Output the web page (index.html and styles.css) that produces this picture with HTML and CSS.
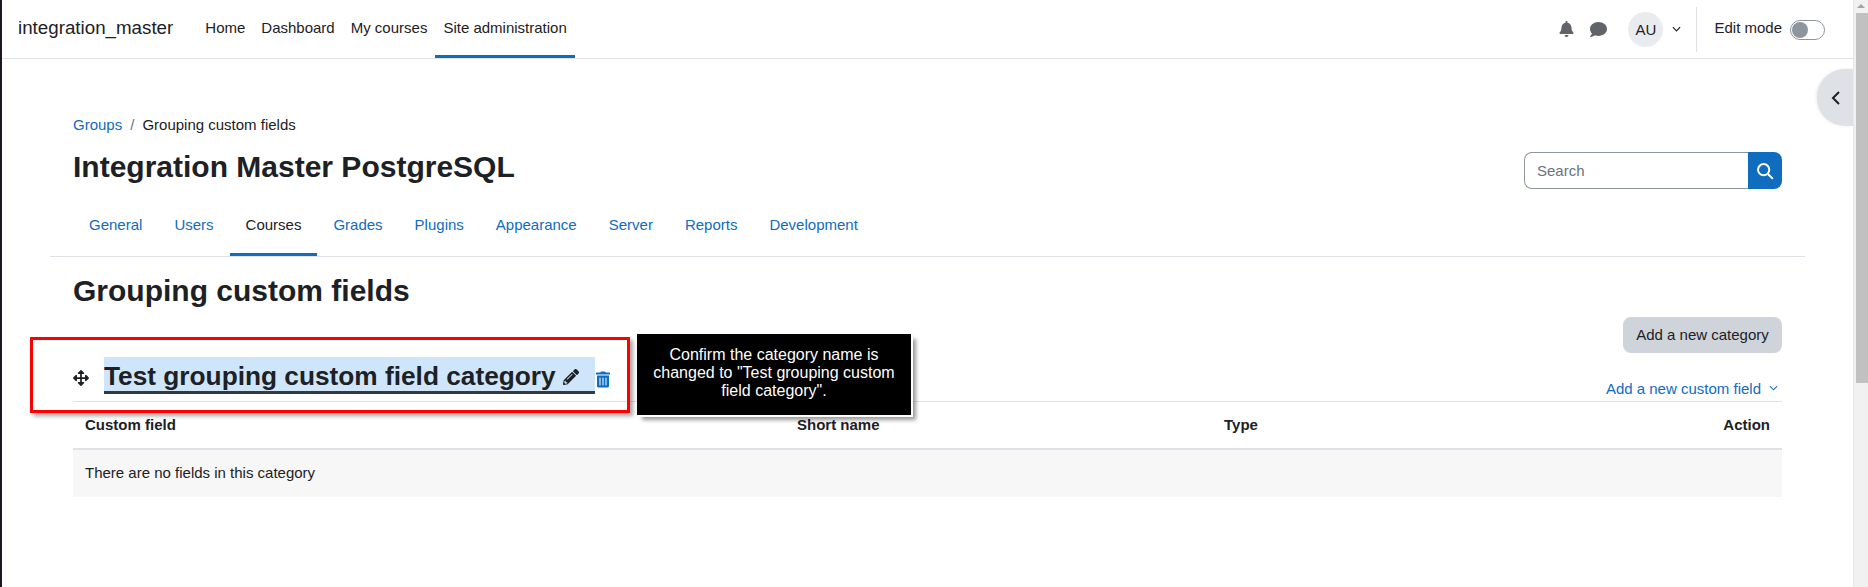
FILE: index.html
```html
<!DOCTYPE html>
<html lang="en">
<head>
<meta charset="utf-8">
<title>Grouping custom fields</title>
<link rel="stylesheet" href="styles.css">
</head>
<body>
<div class="page">
  <div class="viewport">
    <header class="navbar">
      <a class="brand">integration_master</a>
      <nav class="primary">
        <a>Home</a><a>Dashboard</a><a>My courses</a><a class="active">Site administration</a>
      </nav>
      <div class="nav-right">
        <svg class="ic-bell" viewBox="0 0 448 512"><path d="M224 512c35.32 0 63.97-28.65 63.97-64H160.03c0 35.35 28.65 64 63.97 64zm215.39-149.71c-19.32-20.76-55.47-51.99-55.47-154.29 0-77.7-54.48-139.9-127.94-155.16V32c0-17.67-14.32-32-31.98-32s-31.98 14.33-31.98 32v20.84C118.56 68.1 64.08 130.3 64.08 208c0 102.3-36.15 133.53-55.47 154.29-6 6.45-8.66 14.16-8.61 21.71.11 16.4 12.98 32 32.1 32h383.8c19.12 0 32-15.6 32.1-32 .05-7.55-2.61-15.27-8.61-21.71z"/></svg>
        <svg class="ic-comment" viewBox="0 0 512 512"><path d="M256 32C114.6 32 0 125.1 0 240c0 49.6 21.4 95 57 130.7C44.5 421.1 2.7 466 2.2 466.5c-2.2 2.3-2.8 5.7-1.5 8.7S4.8 480 8 480c66.3 0 116-31.8 140.6-51.4 32.7 12.3 69 19.4 107.4 19.4 141.4 0 256-93.1 256-208S397.4 32 256 32z"/></svg>
        <span class="avatar">AU</span>
        <svg class="ic-chev" viewBox="0 0 10 6"><path d="M1 1l4 4 4-4"/></svg>
        <span class="divider"></span>
        <span class="edit-label">Edit mode</span>
        <span class="toggle"><span class="knob"></span></span>
      </div>
    </header>

    <main class="content">
      <div class="breadcrumb"><a class="link">Groups</a><span class="sep">/</span><span>Grouping custom fields</span></div>
      <div class="title-row">
        <h1>Integration Master PostgreSQL</h1>
        <div class="search">
          <span class="search-input">Search</span>
          <span class="search-btn">
            <svg viewBox="0 0 16 16"><circle cx="6.8" cy="6.8" r="5"/><path d="M10.6 10.6l4.4 4.4"/></svg>
          </span>
        </div>
      </div>
      <nav class="tabs">
        <a>General</a><a>Users</a><a class="active">Courses</a><a>Grades</a><a>Plugins</a><a>Appearance</a><a>Server</a><a>Reports</a><a>Development</a>
      </nav>
      <h2>Grouping custom fields</h2>
      <div class="add-row"><span class="btn">Add a new category</span></div>
      <div class="cat-row">
        <svg class="ic-move" viewBox="0 0 512 512"><path d="M352.201 425.775l-79.196 79.196c-9.373 9.373-24.568 9.373-33.941 0l-79.196-79.196c-15.119-15.119-4.411-40.971 16.971-40.97h51.162L228 284H127.196v51.162c0 21.382-25.851 32.09-40.971 16.971L7.029 272.937c-9.373-9.373-9.373-24.569 0-33.941L86.225 159.8c15.119-15.119 40.971-4.411 40.971 16.971V228H228V127.196h-51.23c-21.382 0-32.09-25.851-16.971-40.971l79.196-79.196c9.373-9.373 24.568-9.373 33.941 0l79.196 79.196c15.119 15.119 4.411 40.971-16.971 40.971h-51.162V228h100.804v-51.162c0-21.382 25.851-32.09 40.97-16.971l79.196 79.196c9.373 9.373 9.373 24.569 0 33.941L425.773 352.2c-15.119 15.119-40.971 4.411-40.97-16.971V284H284v100.804h51.23c21.382 0 32.09 25.851 16.971 40.971z"/></svg>
        <div class="cat-name">
          <span class="cat-text">Test grouping custom field category</span>
          <svg class="ic-pencil" viewBox="0 0 512 512"><path d="M497.9 142.1l-46.1 46.1c-4.7 4.7-12.3 4.7-17 0l-111-111c-4.7-4.7-4.7-12.3 0-17l46.1-46.1c18.7-18.7 49.1-18.7 67.9 0l60.1 60.1c18.8 18.7 18.8 49.1 0 67.9zM284.2 99.8L21.6 362.4.4 483.9c-2.9 16.4 11.4 30.6 27.8 27.8l121.5-21.3 262.6-262.6c4.7-4.7 4.7-12.3 0-17l-111-111c-4.8-4.7-12.4-4.7-17.1 0zM124.1 339.9c-5.5-5.5-5.5-14.3 0-19.8l154-154c5.5-5.5 14.3-5.5 19.8 0s5.5 14.3 0 19.8l-154 154c-5.5 5.5-14.3 5.5-19.8 0zM88 424h48v36.3l-64.5 11.3-31.1-31.1L51.7 376H88v48z"/></svg>
        </div>
        <svg class="ic-trash" viewBox="0 0 448 512"><path d="M32 464a48 48 0 0 0 48 48h288a48 48 0 0 0 48-48V128H32zm272-256a16 16 0 0 1 32 0v224a16 16 0 0 1-32 0zm-96 0a16 16 0 0 1 32 0v224a16 16 0 0 1-32 0zm-96 0a16 16 0 0 1 32 0v224a16 16 0 0 1-32 0zM432 32H312l-9-19A24 24 0 0 0 281.5 0h-114.3a23.7 23.7 0 0 0-21.4 13L137 32H16A16 16 0 0 0 0 48v32a16 16 0 0 0 16 16h416a16 16 0 0 0 16-16V48a16 16 0 0 0-16-16z"/></svg>
        <a class="add-field link">Add a new custom field<svg class="ic-chev-link" viewBox="0 0 10 6"><path d="M1 1l4 4 4-4"/></svg></a>
      </div>
      <div class="thead">
        <span class="c1">Custom field</span><span class="c2">Short name</span><span class="c3">Type</span><span class="c4">Action</span>
      </div>
      <div class="empty">There are no fields in this category</div>
    </main>

    <div class="drawer-toggle">
      <svg viewBox="0 0 10 16"><path d="M8 2L2 8l6 6"/></svg>
    </div>
    <div class="redbox"></div>
    <div class="callout">Confirm the category name is changed to "Test grouping custom field category".</div>
  </div>
  <div class="scrollbar">
    <span class="arrow"></span>
    <span class="thumb"></span>
  </div>
</div>
</body>
</html>
```
FILE: styles.css
```css
* { box-sizing: border-box; }
html, body { margin: 0; height: 100%; overflow: hidden; background: #fff; }
body { font-family: "Liberation Sans", Arial, sans-serif; font-size: 15px; color: #1d2125; }
a { text-decoration: none; color: inherit; }
.link { color: #0f6cbf; }

.page { display: flex; height: 587px; }
.viewport { position: relative; flex: 1; border-left: 2px solid #1d1520; min-width: 0; }

.navbar { display: flex; align-items: stretch; height: 59px; border-bottom: 1px solid #dee2e6; padding: 0 28px 0 16px; }
.brand { font-size: 18.75px; line-height: 56px; margin-right: 24px; }
.primary { display: flex; }
.primary a { padding: 0 8px; line-height: 56px; height: 58px; }
.primary a.active { border-bottom: 3px solid #0f6cbf; }
.nav-right { margin-left: auto; display: flex; align-items: center; }
.ic-bell { width: 15px; height: 16px; fill: #606468; }
.ic-comment { width: 17px; height: 17px; fill: #606468; margin-left: 16px; }
.avatar { width: 35px; height: 35px; border-radius: 50%; background: #e9ecef; display: flex; align-items: center; justify-content: center; font-size: 15px; margin-left: 21px; }
.ic-chev { width: 9px; height: 6px; margin-left: 9px; fill: none; stroke: #1d2125; stroke-width: 1.3; }
.divider { width: 1px; height: 45px; background: #dee2e6; margin: 0 17px 0 15px; }
.edit-label { font-size: 15px; margin-bottom: 3px; }
.toggle { width: 35px; height: 20px; border: 1px solid #8f959e; border-radius: 10px; margin-left: 8px; margin-top: 2px; padding: 1px; background: #fff; display: flex; }
.knob { width: 16px; height: 16px; border-radius: 50%; background: #8f959e; }

.content { padding: 57px 71px 0; position: relative; }
.breadcrumb { font-size: 15px; line-height: 18px; display: flex; }
.sep { margin: 0 8px; color: #6a737b; }
.title-row { display: flex; justify-content: space-between; align-items: center; margin-top: 8px; height: 50px; }
h1 { margin: 0; font-size: 30px; line-height: 36px; font-weight: 700; }
.search { display: flex; height: 37px; width: 258px; margin-top: 7px; }
.search-input { flex: 1; border: 1px solid #8f959e; border-right: 0; border-radius: 8px 0 0 8px; padding: 0 12px; line-height: 35px; color: #6a737b; font-size: 15px; }
.search-btn { width: 34px; background: #0f6cbf; border-radius: 0 8px 8px 0; display: flex; align-items: center; justify-content: center; }
.search-btn svg { width: 18px; height: 18px; fill: none; stroke: #fff; stroke-width: 1.8; }

.tabs { display: flex; margin: 19px -23px 0; height: 46px; border-bottom: 1px solid #dee2e6; padding-left: 23px; }
.tabs a { color: #0f6cbf; padding: 0 16px; line-height: 28px; height: 45px; font-size: 15px; }
.tabs a.active { color: #1d2125; border-bottom: 3px solid #0f6cbf; }

h2 { margin: 16px 0 0; font-size: 30px; line-height: 36px; font-weight: 700; }
.add-row { display: flex; justify-content: flex-end; margin-top: 8px; }
.btn { background: #ced4da; border-radius: 8px; height: 36px; width: 159px; text-align: center; line-height: 36px; font-size: 15px; }

.cat-row { display: flex; align-items: center; height: 49px; border-bottom: 1px solid #dee2e6; }
.ic-move { width: 16px; height: 16px; fill: #1d2125; margin-top: 2px; }
.cat-name { margin-left: 15px; width: 491px; height: 37px; margin-bottom: 3px; background: #cfe6fa; border-bottom: 3px solid #343a40; display: flex; align-items: center; }
.cat-text { font-size: 26.25px; font-weight: 700; line-height: 34px; padding-top: 3px; }
.ic-pencil { width: 16px; height: 16px; margin-left: 7px; margin-top: 6px; fill: #1d2125; }
.ic-trash { width: 14px; height: 17px; fill: #0f6cbf; margin-left: 1px; margin-top: 4px; }
.add-field { margin-left: auto; margin-right: 4px; font-size: 15px; display: flex; align-items: center; margin-top: 22px; }
.ic-chev-link { width: 9px; height: 6px; margin-left: 8px; fill: none; stroke: #0f6cbf; stroke-width: 1.2; }

.thead { display: flex; height: 48px; padding: 0 12px; line-height: 45px; border-bottom: 2px solid #dee2e6; font-weight: 700; font-size: 15px; }
.c1 { width: 712px; }
.c2 { width: 427px; }
.c3 { flex: 1; }
.empty { background: #f7f7f7; height: 47px; line-height: 46px; padding: 0 12px; font-size: 15px; }

.drawer-toggle { position: absolute; top: 69px; right: 0; width: 36px; height: 57px; padding-left: 2px; background: #dee2e6; border-radius: 28px 0 0 28px; display: flex; align-items: center; justify-content: center; box-shadow: -1px 0 3px rgba(0,0,0,.08); }
.drawer-toggle svg { width: 10px; height: 16px; fill: none; stroke: #1d2125; stroke-width: 2; }

.redbox { position: absolute; left: 28px; top: 337px; width: 600px; height: 76px; border: 3px solid #f00; box-shadow: 3px 3px 4px rgba(0,0,0,.35); }
.callout { position: absolute; left: 635px; top: 334px; width: 274px; height: 81px; background: #000; color: #fff; font-size: 16px; line-height: 18px; padding: 12px 10px 0; text-align: center; box-shadow: 2px 2px 0 #fff, 5px 5px 4px rgba(0,0,0,.4); }

.scrollbar { width: 15px; background: #f1f1f1; position: relative; padding: 13px 2px 0; border-left: 1px solid #e8e8e8; }
.thumb { display: block; height: 370px; width: 12px; background: #c1c1c1; }
.arrow { position: absolute; top: 4px; left: 3px; width: 0; height: 0; border: 4px solid transparent; border-top: 0; border-bottom: 4px solid #a3a3a3; }
```
